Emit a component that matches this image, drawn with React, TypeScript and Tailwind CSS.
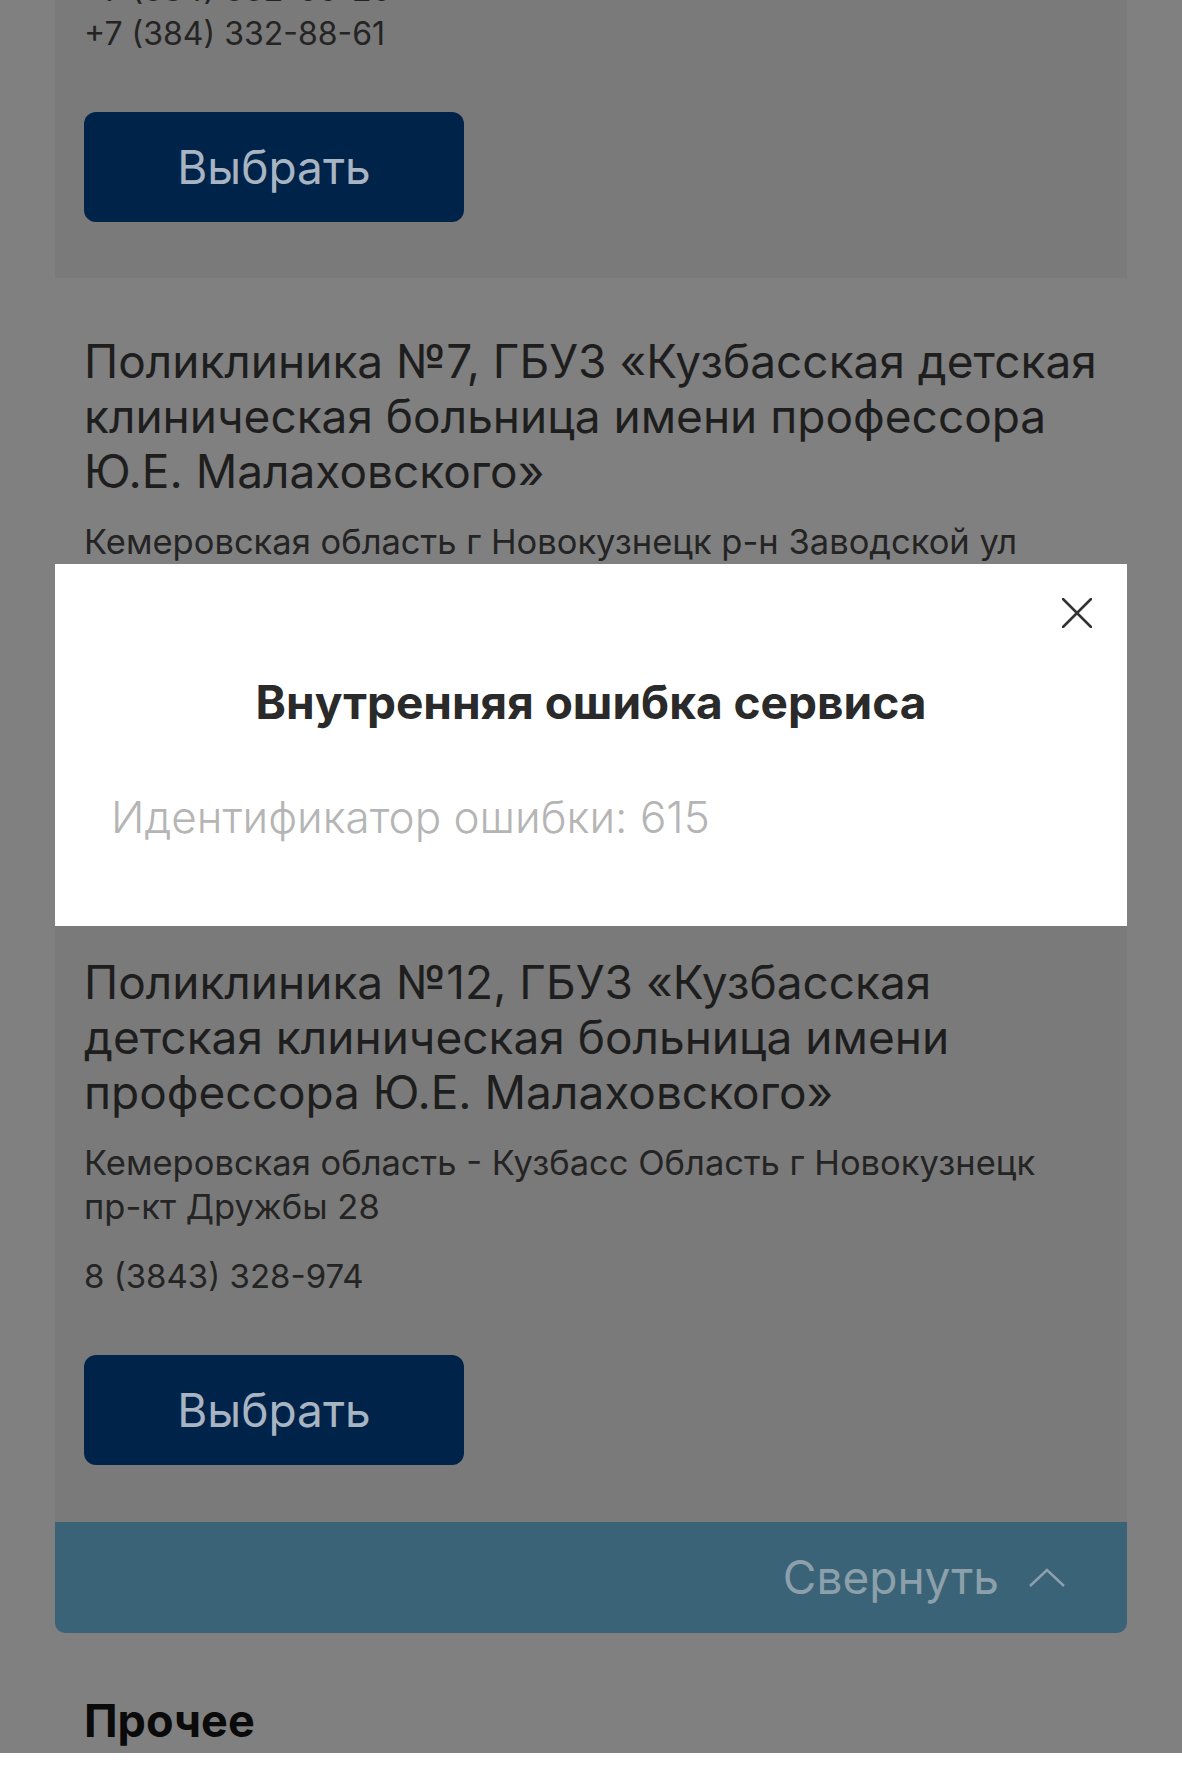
import React from "react";

type Clinic = {
  title: string[];
  address: string[];
  phones: string[];
};

const clinics: Clinic[] = [
  {
    title: [
      "Поликлиника №7, ГБУЗ «Кузбасская детская",
      "клиническая больница имени профессора",
      "Ю.Е. Малаховского»",
    ],
    address: [
      "Кемеровская область г Новокузнецк р-н Заводской ул",
      "Климасенко 1",
    ],
    phones: ["8 (3843) 372-615"],
  },
  {
    title: [
      "Поликлиника №12, ГБУЗ «Кузбасская",
      "детская клиническая больница имени",
      "профессора Ю.Е. Малаховского»",
    ],
    address: [
      "Кемеровская область - Кузбасс Область г Новокузнецк",
      "пр-кт Дружбы 28",
    ],
    phones: ["8 (3843) 328-974"],
  },
];

function SelectButton({ first }: { first?: boolean }) {
  return (
    <button
      className={`${first ? "mt-[56px]" : "mt-[57px]"} flex h-[110px] w-[380px] items-center justify-center rounded-[12px] bg-[#00234a] text-[46px] text-[#a9b4c2]`}
    >
      Выбрать
    </button>
  );
}

function ClinicCard({ clinic, shaded, last }: { clinic: Clinic; shaded: boolean; last?: boolean }) {
  return (
    <div className={`px-[29px] pt-[56px] ${last ? "pb-[57px]" : "pb-[55px]"} ${shaded ? "bg-[#7a7a7a]" : ""}`}>
      <div className="text-[46px] leading-[55px] text-[#1e1e1e]">
        {clinic.title.map((line) => (
          <div key={line} className="whitespace-nowrap">
            {line}
          </div>
        ))}
      </div>
      <div className="mt-[21px] text-[34.5px] leading-[44px] text-[#242424]">
        {clinic.address.map((line) => (
          <div key={line} className="whitespace-nowrap">
            {line}
          </div>
        ))}
      </div>
      <div className="mt-[25px] text-[33px] leading-[44px] text-[#242424]">
        {clinic.phones.map((p) => (
          <div key={p}>{p}</div>
        ))}
      </div>
      <SelectButton />
    </div>
  );
}

export default function App() {
  return (
    <div className="relative flex h-[1774px] flex-col overflow-hidden bg-[#808080] font-['Inter','Noto_Sans',sans-serif]">
      <div className="flex-1 px-[55px]">
        {/* previous card, scrolled mostly out of view */}
        <div className="-mt-[32px] bg-[#7a7a7a] px-[29px] pb-[56px]">
          <div className="text-[32px] leading-[44px] text-[#242424]">
            <div>+7 (384) 332-00-20</div>
            <div>+7 (384) 332-88-61</div>
          </div>
          <SelectButton first />
        </div>

        <ClinicCard clinic={clinics[0]} shaded={false} />
        <ClinicCard clinic={clinics[1]} shaded={true} last />

        <div className="flex h-[111px] items-center justify-end gap-[30px] rounded-b-[10px] bg-[#3b6377] pr-[62px]">
          <span className="text-[46px] text-[#8ba0aa]">Свернуть</span>
          <svg width="36" height="20" viewBox="0 0 36 20" fill="none">
            <path d="M1 18L18 2L35 18" stroke="#8ba0aa" strokeWidth="2.5" />
          </svg>
        </div>

        <div className="mt-[64px] px-[29px] text-[45px] font-bold leading-[48px] text-[#0a0a0a]">Прочее</div>
      </div>
      <div className="h-[21px] bg-white" />

      {/* error dialog */}
      <div className="absolute left-[55px] top-[564px] h-[362px] w-[1072px] bg-white">
        <button className="absolute right-[35px] top-[34px] h-[30px] w-[30px]">
          <svg width="30" height="30" viewBox="0 0 30 30" fill="none">
            <path d="M1 1L29 29M29 1L1 29" stroke="#333333" strokeWidth="2.5" strokeLinecap="round" />
          </svg>
        </button>
        <div className="pt-[112px] text-center text-[46px] font-bold leading-[52px] text-[#2a2a2a]">
          Внутренняя ошибка сервиса
        </div>
        <div className="mt-[61px] pl-[56px] text-[44px] font-light leading-[56px] text-[#b5b5b5]">
          Идентификатор ошибки: 615
        </div>
      </div>
    </div>
  );
}
